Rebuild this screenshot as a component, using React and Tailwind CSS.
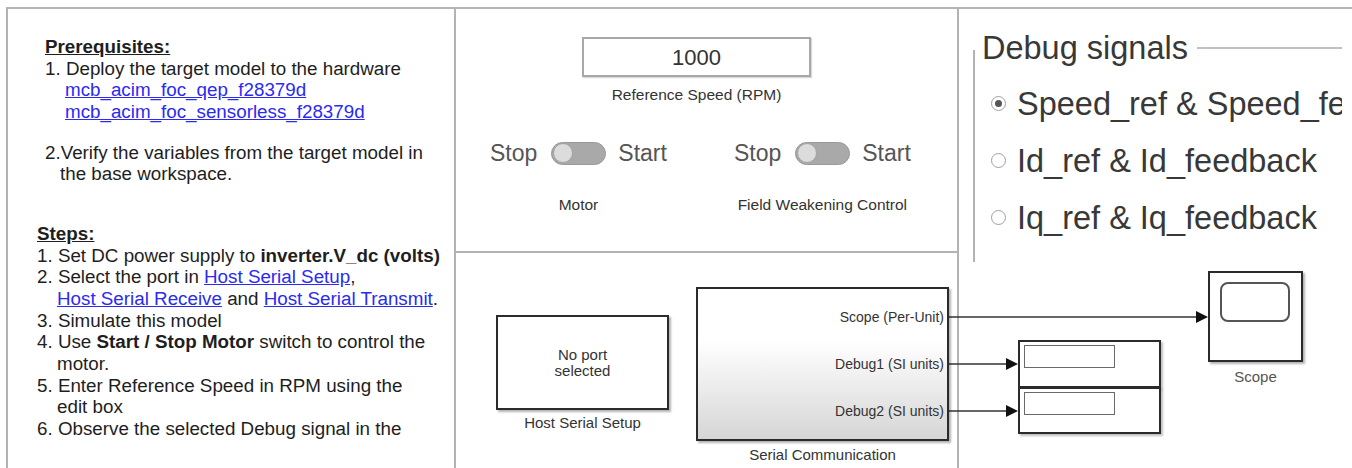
function Toggle({ label }) {
  return (
    <div className="flex flex-col items-center">
      <div className="flex items-center h-[26px] text-[23px] leading-[26px] text-[#555]">
        <span>Stop</span>
        <div className="ml-[14px] mr-[12px] w-[55px] h-[23px] rounded-full bg-[#a9a9a9] border border-[#9a9a9a] flex items-center px-[1px]">
          <div className="w-[20px] h-[20px] rounded-full bg-[#dcdcdc] border border-[#a3a3a3]" />
        </div>
        <span>Start</span>
      </div>
      <div className="mt-[30px] text-[15.5px] leading-[18px] text-[#333]">{label}</div>
    </div>
  );
}

function Radio({ checked, children }) {
  return (
    <div className="flex items-center h-[57px]">
      <div className="w-[15px] h-[15px] shrink-0 rounded-full border-[1.5px] border-[#a0a0a0] bg-white flex items-center justify-center">
        {checked && <div className="w-[7px] h-[7px] rounded-full bg-[#555]" />}
      </div>
      <span className="ml-[11px] text-[32.5px] leading-[40px] text-[#383838]">{children}</span>
    </div>
  );
}

function LeftPanel() {
  const link = "text-[#2a2af2] underline decoration-[#2a2af2]";
  return (
    <div className="w-[448px] shrink-0 border-r-2 border-[#b3b3b3] text-[18.8px] leading-[21.67px] text-[#1e1e1e] pt-[27px] whitespace-nowrap">
      <div className="pl-[37px]">
        <div className="font-bold underline">Prerequisites:</div>
        <div>1. Deploy the target model to the hardware</div>
        <div className="pl-[20px]">
          <a className={link}>mcb_acim_foc_qep_f28379d</a>
        </div>
        <div className="pl-[20px]">
          <a className={link}>mcb_acim_foc_sensorless_f28379d</a>
        </div>
      </div>
      <div className="pl-[37px] mt-[19px]">
        <div>2.Verify the variables from the target model in</div>
        <div className="pl-[15px]">the base workspace.</div>
      </div>
      <div className="pl-[29px] mt-[38px]">
        <div className="font-bold underline">Steps:</div>
        <div>
          1. Set DC power supply to <span className="font-bold">inverter.V_dc (volts)</span>
        </div>
        <div>
          2. Select the port in <a className={link}>Host Serial Setup</a>,
        </div>
        <div className="pl-[20px]">
          <a className={link}>Host Serial Receive</a> and <a className={link}>Host Serial Transmit</a>.
        </div>
        <div>3. Simulate this model</div>
        <div>
          4. Use <span className="font-bold">Start / Stop Motor</span> switch to control the
        </div>
        <div className="pl-[20px]">motor.</div>
        <div>5. Enter Reference Speed in RPM using the</div>
        <div className="pl-[20px]">edit box</div>
        <div>6. Observe the selected Debug signal in the</div>
      </div>
    </div>
  );
}

function MiddleTop() {
  return (
    <div className="w-[503px] shrink-0 border-r-2 border-b-2 border-[#b3b3b3] pt-[28px]">
      <div className="ml-[126px] w-[229px] flex flex-col items-center">
        <div className="w-[229px] h-[40px] border-2 border-[#a8a8a8] bg-white flex items-center justify-center text-[22px] text-[#333] shadow-[1px_1px_1px_rgba(0,0,0,0.15)]">
          1000
        </div>
        <div className="mt-[9px] text-[15.5px] leading-[18px] text-[#333] whitespace-nowrap">Reference Speed (RPM)</div>
      </div>
      <div className="flex pl-[34px] gap-[67px] mt-[36px] whitespace-nowrap">
        <Toggle label="Motor" />
        <Toggle label="Field Weakening Control" />
      </div>
    </div>
  );
}

function DebugPanel() {
  return (
    <div className="flex-1 pl-[14px] pt-[19px]">
      <div className="w-[369px] flex flex-col">
        <div className="flex items-center h-[40px] pl-[9px]">
          <span className="text-[32.5px] leading-[40px] text-[#383838] whitespace-nowrap">Debug signals</span>
          <div className="flex-1 ml-[9px] h-[2px] bg-[#c0c0c0]" />
        </div>
        <div className="-mt-[18px] h-[212px] border-l-2 border-[#b3b3b3] overflow-hidden whitespace-nowrap pt-[25px] pl-[16px]">
          <Radio checked>Speed_ref &amp; Speed_feedback</Radio>
          <Radio>Id_ref &amp; Id_feedback</Radio>
          <Radio>Iq_ref &amp; Iq_feedback</Radio>
        </div>
      </div>
    </div>
  );
}

function Canvas() {
  const block = "absolute border-2 border-[#2b2b2b] shadow-[2px_2px_2px_rgba(0,0,0,0.3)]";
  return (
    <div className="flex-1 relative whitespace-nowrap">
      <div className="w-[503px] h-full border-r-2 border-[#b3b3b3]" />
      <svg className="absolute left-0 top-0" width="896" height="215" viewBox="0 0 896 215">
        <g stroke="#333" strokeWidth="1.5" fill="none">
          <line x1="493" y1="64" x2="742" y2="64" />
          <line x1="493" y1="111" x2="552" y2="111" />
          <line x1="493" y1="158" x2="552" y2="158" />
        </g>
        <g fill="#111">
          <polygon points="752,64 740,58 740,70" />
          <polygon points="562,111 550,105 550,117" />
          <polygon points="562,158 550,152 550,164" />
        </g>
      </svg>

      {/* Host Serial Setup */}
      <div className={`${block} left-[40px] top-[62px] w-[173px] h-[95px] bg-white flex items-center justify-center text-center text-[15px] leading-[16px] text-[#333]`}>
        <div>
          No port
          <br />
          selected
        </div>
      </div>
      <div className="absolute left-[40px] top-[161px] w-[173px] text-center text-[15px] leading-[18px] text-[#333]">
        Host Serial Setup
      </div>

      {/* Serial Communication */}
      <div className={`${block} left-[240px] top-[34px] w-[253px] h-[154px] bg-linear-to-b from-white from-35% to-[#d6d6d6] text-[14px] leading-[16px] text-[#333]`}>
        <div className="absolute right-[3px] top-[20px]">Scope (Per-Unit)</div>
        <div className="absolute right-[3px] top-[67px]">Debug1 (SI units)</div>
        <div className="absolute right-[3px] top-[114px]">Debug2 (SI units)</div>
      </div>
      <div className="absolute left-[240px] top-[193px] w-[253px] text-center text-[15px] leading-[18px] text-[#333]">
        Serial Communication
      </div>

      {/* Displays */}
      <div className="absolute left-[562px] top-[87px] w-[143px] flex flex-col">
        <div className="h-[48px] border-2 border-[#2b2b2b] bg-white shadow-[2px_2px_2px_rgba(0,0,0,0.25)] pl-[4px] pt-[3px]">
          <div className="w-[91px] h-[23px] border-[1.5px] border-[#6a6a6a]" />
        </div>
        <div className="-mt-[1px] h-[47px] border-2 border-[#2b2b2b] bg-white shadow-[2px_2px_2px_rgba(0,0,0,0.25)] pl-[4px] pt-[3px]">
          <div className="w-[91px] h-[23px] border-[1.5px] border-[#6a6a6a]" />
        </div>
      </div>

      {/* Scope */}
      <div className={`${block} left-[752px] top-[18px] w-[95px] h-[91px] bg-white pl-[10px] pt-[9px]`}>
        <div className="w-[70px] h-[40px] rounded-[8px] border-2 border-[#555]" />
      </div>
      <div className="absolute left-[752px] top-[115px] w-[95px] text-center text-[15px] leading-[18px] text-[#555]">
        Scope
      </div>
    </div>
  );
}

export default function App() {
  return (
    <div className="w-[1352px] h-[468px] bg-white overflow-hidden pt-[7px] pl-[6px] [font-family:'Liberation_Sans',Arial,sans-serif]">
      <div className="flex h-full border-t-2 border-l-2 border-[#b3b3b3]">
        <LeftPanel />
        <div className="flex-1 flex flex-col">
          <div className="flex h-[244px] shrink-0">
            <MiddleTop />
            <DebugPanel />
          </div>
          <Canvas />
        </div>
      </div>
    </div>
  );
}
